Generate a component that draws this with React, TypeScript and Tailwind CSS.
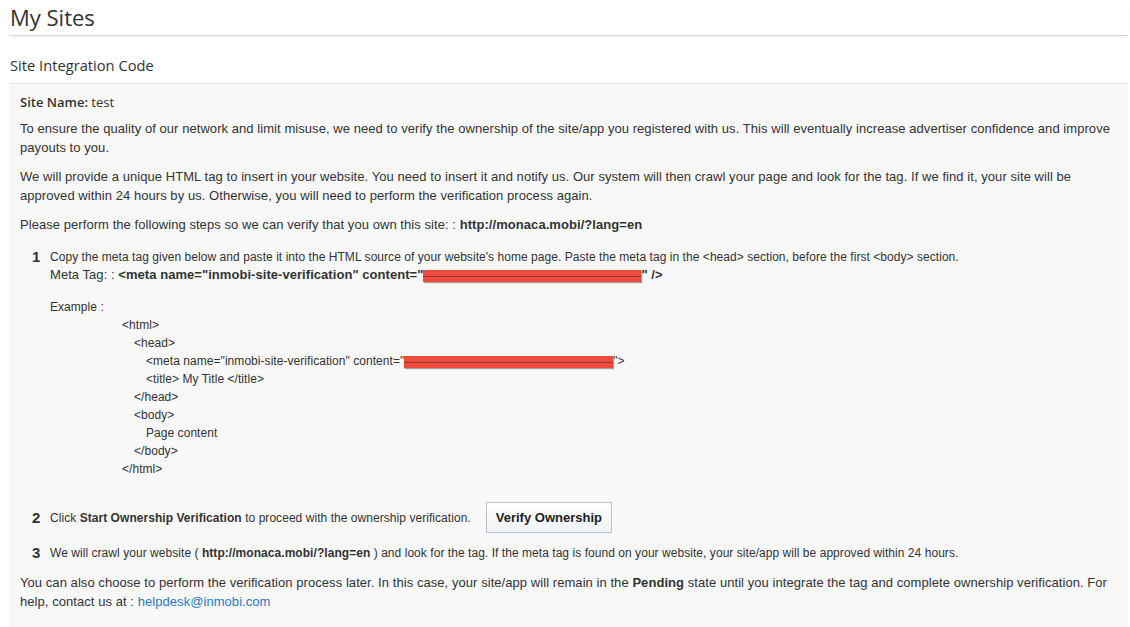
import React from "react";

const Redact = ({ w, h }: { w: number; h: number }) => (
  <span
    className="relative inline-block align-middle bg-[#ef4b3c] shadow-[1px_1px_1px_rgba(0,0,0,0.35)] overflow-hidden"
    style={{ width: w, height: h }}
  >
    <span className="absolute left-0 right-0 top-1/2 h-px bg-[#8a3a35]" />
  </span>
);

export default function App() {
  return (
    <div className="w-[1130px] min-h-[627px] bg-white text-[#333] font-['Liberation_Sans',Arial,sans-serif]">
      <div className="pl-[10px] pr-[2px]">
        <h1 className="font-['Open_Sans',sans-serif] text-[22px] leading-[35px] text-[#333] border-b border-[#d6d6d6] shadow-[0_3px_4px_-2px_rgba(0,0,0,0.08)]">
          My Sites
        </h1>
        <h2 className="mt-[11px] font-['Open_Sans',sans-serif] text-[14.7px] leading-[36px] text-[#333] border-b border-[#e3e3e3]">
          Site Integration Code
        </h2>
        <div className="bg-[#f8f8f8] pl-[10px] pr-[12px] pt-[9px] pb-[30px] text-[13px] leading-[19px] tracking-[0.06px]">
          <p className="font-['Open_Sans',sans-serif] text-[13px] tracking-normal">
            <b className="font-semibold">Site Name:</b> test
          </p>
          <p className="mt-[7px]">
            To ensure the quality of our network and limit misuse, we need to verify the ownership of the site/app you registered with us. This will eventually increase advertiser confidence and improve payouts to you.
          </p>
          <p className="mt-[10px]">
            We will provide a unique HTML tag to insert in your website. You need to insert it and notify us. Our system will then crawl your page and look for the tag. If we find it, your site will be approved within 24 hours by us. Otherwise, you will need to perform the verification process again.
          </p>
          <p className="mt-[10px]">
            Please perform the following steps so we can verify that you own this site: : <b>http://monaca.mobi/?lang=en</b>
          </p>

          <div className="mt-[14px] pl-[12px] text-[12px] leading-[18px] tracking-[0.05px]">
            <div className="flex">
              <span className="w-[18px] shrink-0 font-bold text-[15px] leading-[18px]">1</span>
              <div>
                <div>
                  Copy the meta tag given below and paste it into the HTML source of your website's home page. Paste the meta tag in the &lt;head&gt; section, before the first &lt;body&gt; section.
                </div>
                <div className="text-[13px]">
                  Meta Tag: : <b>&lt;meta name="inmobi-site-verification" content="<Redact w={218} h={12} />" /&gt;</b>
                </div>
                <div className="mt-[14px]">Example :</div>
                <div className="pl-[72px]">
                  <div>&lt;html&gt;</div>
                  <div className="pl-[12px]">&lt;head&gt;</div>
                  <div className="pl-[24px]">
                    &lt;meta name="inmobi-site-verification" content="<Redact w={209} h={12} />"&gt;
                  </div>
                  <div className="pl-[24px]">&lt;title&gt; My Title &lt;/title&gt;</div>
                  <div className="pl-[12px]">&lt;/head&gt;</div>
                  <div className="pl-[12px]">&lt;body&gt;</div>
                  <div className="pl-[24px]">Page content</div>
                  <div className="pl-[12px]">&lt;/body&gt;</div>
                  <div>&lt;/html&gt;</div>
                </div>
              </div>
            </div>

            <div className="flex items-center mt-[24px]">
              <span className="w-[18px] shrink-0 font-bold text-[15px]">2</span>
              <span>
                Click <b>Start Ownership Verification</b> to proceed with the ownership verification.
              </span>
              <button className="ml-[15px] h-[31px] px-[9px] border border-[#b9c3cf] bg-gradient-to-b from-white to-[#eef2f7] text-[13px] font-bold tracking-normal text-[#222]">
                Verify Ownership
              </button>
            </div>

            <div className="flex mt-[11px]">
              <span className="w-[18px] shrink-0 font-bold text-[15px]">3</span>
              <span>
                We will crawl your website ( <b>http://monaca.mobi/?lang=en</b> ) and look for the tag. If the meta tag is found on your website, your site/app will be approved within 24 hours.
              </span>
            </div>
          </div>

          <p className="mt-[11px]">
            You can also choose to perform the verification process later. In this case, your site/app will remain in the <b>Pending</b> state until you integrate the tag and complete ownership verification. For help, contact us at :{" "}
            <a className="text-[#1f7bc6]" href="#">helpdesk@inmobi.com</a>
          </p>
        </div>
      </div>
    </div>
  );
}
